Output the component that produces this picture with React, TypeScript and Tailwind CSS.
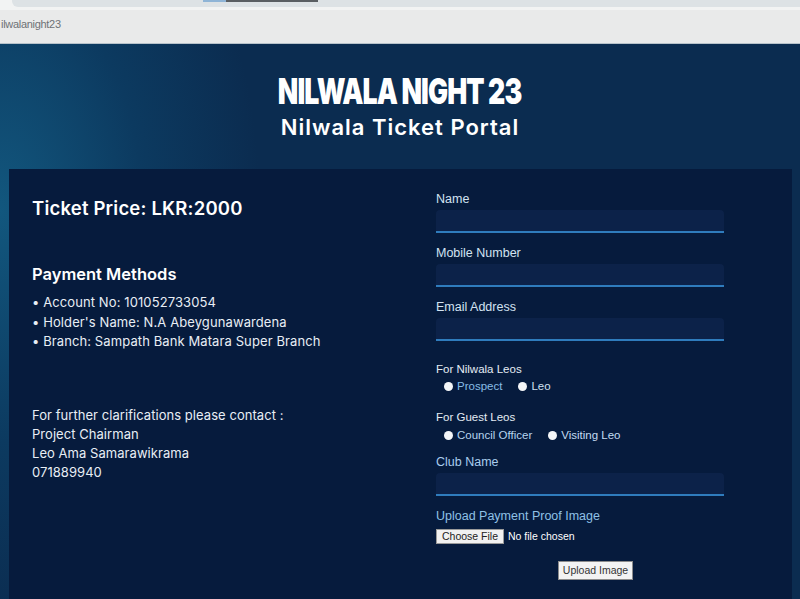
import React from "react";

function Field({ label, labelColor = "text-[#d3e3f2]", mt = "mt-0" }: { label: string; labelColor?: string; mt?: string }) {
  return (
    <div className={mt}>
      <div className={`text-[12.5px] leading-[15px] ${labelColor}`}>{label}</div>
      <div className="mt-[3px] h-[23px] w-[288px] rounded-t-[4px] bg-[#0c2249] border-b-2 border-[#2f7cbd]" />
    </div>
  );
}

function Radio({ label, color }: { label: string; color: string }) {
  return (
    <span className="flex items-center gap-[4px]">
      <span className="inline-block h-[9px] w-[9px] rounded-full bg-[#f4f6f8]" />
      <span className={`text-[11.5px] leading-[14px] ${color}`}>{label}</span>
    </span>
  );
}

export default function App() {
  return (
    <div className="h-[599px] w-[800px] overflow-hidden flex flex-col" style={{ fontFamily: "'Liberation Sans', Arial, sans-serif" }}>
      {/* browser chrome */}
      <div className="h-[44px] shrink-0 bg-[#e9eaea] flex flex-col border-b border-[#b7c2ca]">
        <div className="h-[10px] bg-[#f2f3f3] relative">
          <div className="ml-[12px] h-[7px] rounded-bl-[6px] bg-[#dde2e5]" />
          <div className="absolute left-[203px] top-0 h-[2px] w-[23px] bg-[#8fb4d6]" />
          <div className="absolute left-[226px] top-0 h-[2px] w-[92px] bg-[#5a5e62]" />
        </div>
        <div className="flex-1 flex items-center pb-[4px] pl-[1px]">
          <span className="text-[11px] text-[#6e7276] tracking-[-0.3px]">ilwalanight23</span>
        </div>
      </div>

      {/* page */}
      <div
        className="flex-1 flex flex-col"
        style={{ background: "radial-gradient(ellipse 260px 420px at 0% 30%, #12577e 0%, #0c3a60 55%, #0b2c50 100%)" }}
      >
        <div className="flex flex-col items-center pt-[29px] h-[125px] shrink-0 text-white" style={{ fontFamily: "Inter, sans-serif" }}>
          <div className="text-[36px] leading-[36px] font-black tracking-[-1.2px] scale-x-[0.74]">NILWALA NIGHT 23</div>
          <div className="text-[22px] leading-[26px] font-semibold mt-[5px] tracking-[1px]">Nilwala Ticket Portal</div>
        </div>

        <div className="flex-1 ml-[9px] mr-[8px] bg-[#061b3d] flex">
          {/* left */}
          <div className="w-[427px] pl-[23px] pt-[27px] text-white" style={{ fontFamily: "Inter, sans-serif" }}>
            <div className="text-[18.5px] leading-[24px] font-semibold tracking-[0.2px]">Ticket Price: LKR:2000</div>
            <div className="mt-[44px] text-[16.5px] leading-[20px] font-semibold">Payment Methods</div>
            <div className="mt-[9px] text-[13px] leading-[19.5px] text-[#e8eef5] tracking-[0.1px]">
              <div>• Account No: 101052733054</div>
              <div>• Holder's Name: N.A Abeygunawardena</div>
              <div>• Branch: Sampath Bank Matara Super Branch</div>
            </div>
            <div className="mt-[54px] text-[13px] leading-[19px] text-[#e8eef5] tracking-[0.05px]">
              <div>For further clarifications please contact :</div>
              <div>Project Chairman</div>
              <div>Leo Ama Samarawikrama</div>
              <div>071889940</div>
            </div>
          </div>

          {/* right form */}
          <div className="pt-[23px]">
            <Field label="Name" />
            <Field label="Mobile Number" mt="mt-[13px]" />
            <Field label="Email Address" mt="mt-[13px]" />

            <div className="mt-[21px] text-[11.5px] leading-[14px] text-[#e4ecf4]">For Nilwala Leos</div>
            <div className="mt-[3px] ml-[8px] flex gap-[16px]">
              <Radio label="Prospect" color="text-[#86bde6]" />
              <Radio label="Leo" color="text-[#cfe0f0]" />
            </div>

            <div className="mt-[17px] text-[11.5px] leading-[14px] text-[#e4ecf4]">For Guest Leos</div>
            <div className="mt-[4px] ml-[8px] flex gap-[16px]">
              <Radio label="Council Officer" color="text-[#b6d4ee]" />
              <Radio label="Visiting Leo" color="text-[#c3dcf2]" />
            </div>

            <Field label="Club Name" labelColor="text-[#a9cdee]" mt="mt-[13px]" />

            <div className="mt-[13px] text-[12.5px] leading-[15px] text-[#8fc1e6]">Upload Payment Proof Image</div>
            <div className="mt-[5px] h-[15px] flex items-center gap-[4px]">
              <button className="h-[15px] px-[5px] bg-[#f1f1f1] border border-[#9a9a9a] text-[10.5px] leading-[13px] text-[#222]">Choose File</button>
              <span className="text-[10.5px] leading-[13px] text-white">No file chosen</span>
            </div>
            <div className="mt-[17px] pl-[122px] flex">
              <button className="h-[19px] w-[75px] bg-[#f3f3f3] border border-[#8c8c8c] text-[10.5px] leading-[17px] text-[#333]">Upload Image</button>
            </div>
          </div>
        </div>
      </div>
    </div>
  );
}
